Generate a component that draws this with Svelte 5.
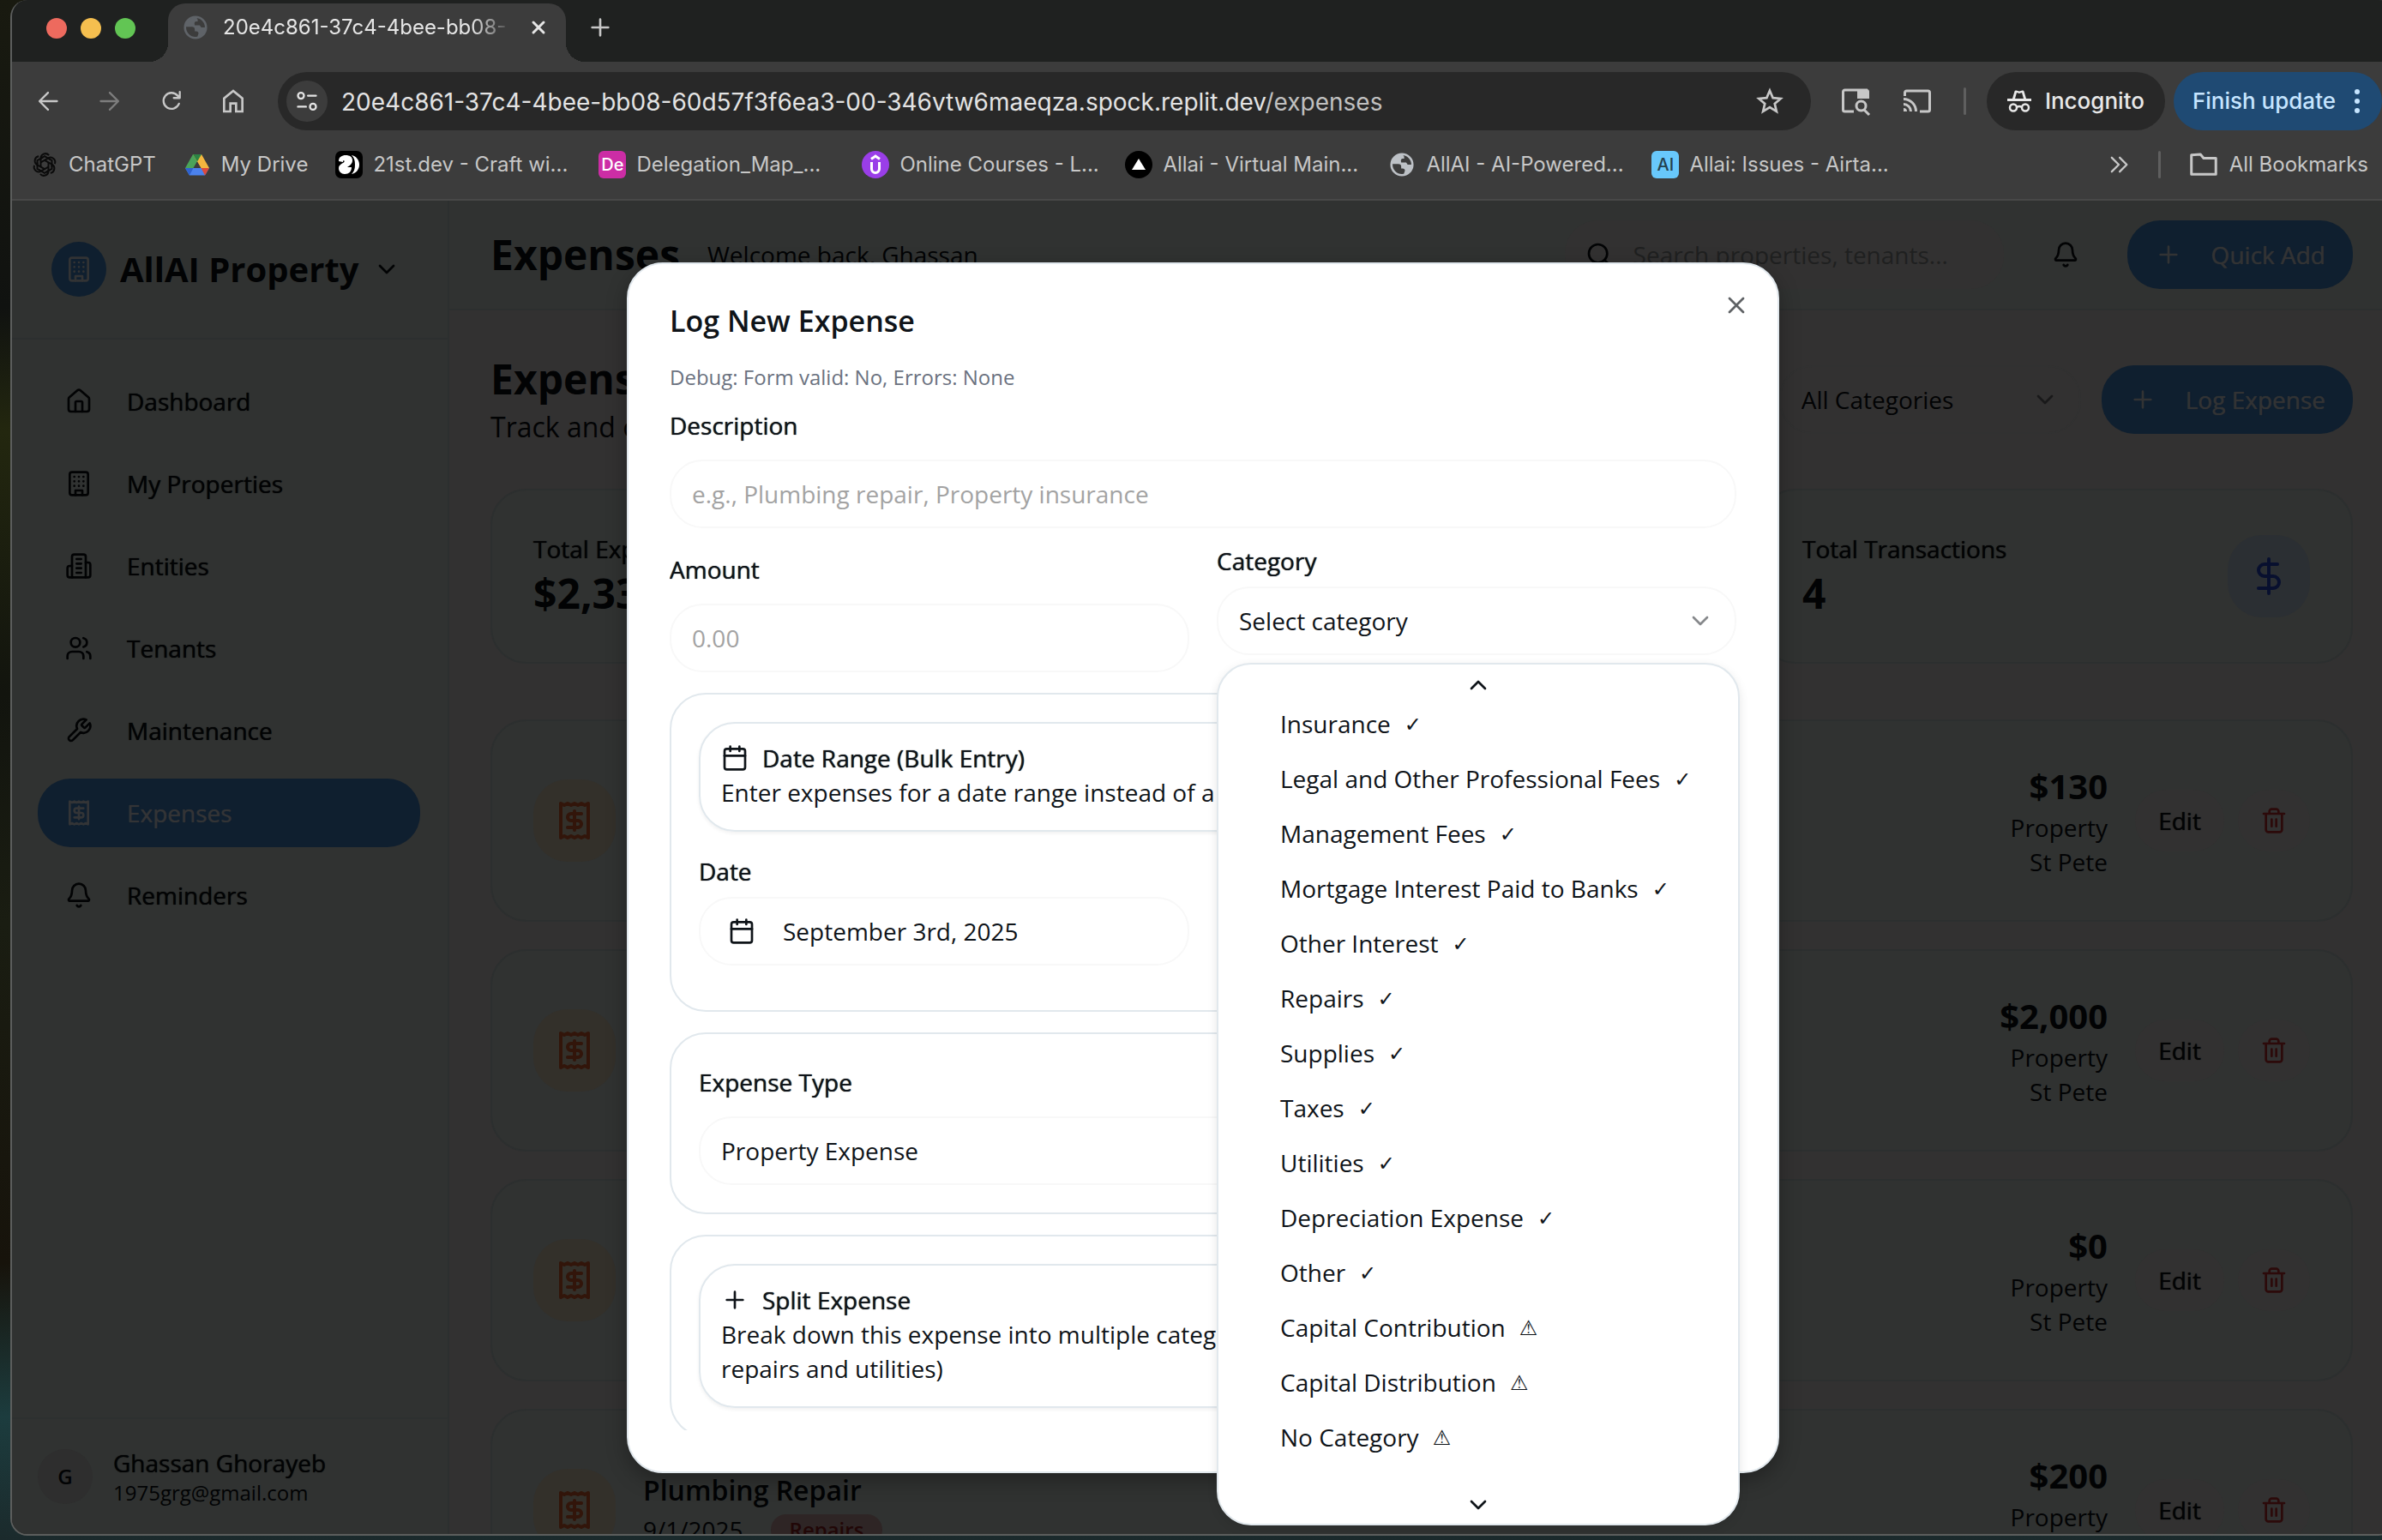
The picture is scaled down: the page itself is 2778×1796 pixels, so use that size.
<script lang="ts">
  const icons: Record<string, string> = {
    home: '<path d="M15 21v-8a1 1 0 0 0-1-1h-4a1 1 0 0 0-1 1v8"/><path d="M3 10a2 2 0 0 1 .709-1.528l7-5.999a2 2 0 0 1 2.582 0l7 5.999A2 2 0 0 1 21 10v9a2 2 0 0 1-2 2H5a2 2 0 0 1-2-2z"/>',
    building: '<rect width="16" height="20" x="4" y="2" rx="2"/><path d="M9 22v-4h6v4M8 6h.01M16 6h.01M12 6h.01M12 10h.01M12 14h.01M16 10h.01M16 14h.01M8 10h.01M8 14h.01"/>',
    building2: '<path d="M6 22V4a2 2 0 0 1 2-2h8a2 2 0 0 1 2 2v18Z"/><path d="M6 12H4a2 2 0 0 0-2 2v6a2 2 0 0 0 2 2h2M18 9h2a2 2 0 0 1 2 2v9a2 2 0 0 1-2 2h-2M10 6h4M10 10h4M10 14h4M10 18h4"/>',
    users: '<path d="M16 21v-2a4 4 0 0 0-4-4H6a4 4 0 0 0-4 4v2"/><circle cx="9" cy="7" r="4"/><path d="M22 21v-2a4 4 0 0 0-3-3.87M16 3.13a4 4 0 0 1 0 7.75"/>',
    wrench: '<path d="M14.7 6.3a1 1 0 0 0 0 1.4l1.6 1.6a1 1 0 0 0 1.4 0l3.77-3.77a6 6 0 0 1-7.94 7.94l-6.91 6.91a2.12 2.12 0 0 1-3-3l6.91-6.91a6 6 0 0 1 7.94-7.94l-3.76 3.76z"/>',
    receipt: '<path d="M4 2v20l2-1 2 1 2-1 2 1 2-1 2 1 2-1 2 1V2l-2 1-2-1-2 1-2-1-2 1-2-1-2 1Z"/><path d="M16 8h-6a2 2 0 1 0 0 4h4a2 2 0 1 1 0 4H8M12 17.5v-11"/>',
    bell: '<path d="M10.268 21a2 2 0 0 0 3.464 0"/><path d="M3.262 15.326A1 1 0 0 0 4 17h16a1 1 0 0 0 .74-1.673C19.41 13.956 18 12.499 18 8A6 6 0 0 0 6 8c0 4.499-1.411 5.956-2.738 7.326"/>',
    down: '<path d="m6 9 6 6 6-6"/>',
    up: '<path d="m18 15-6-6-6 6"/>',
    plus: '<path d="M5 12h14M12 5v14"/>',
    close: '<path d="M18 6 6 18M6 6l12 12"/>',
    search: '<circle cx="11" cy="11" r="8"/><path d="m21 21-4.3-4.3"/>',
    dollar: '<path d="M12 2v20M17 5H9.500a3.500 3.500 0 0 0 0 7h5a3.500 3.500 0 0 1 0 7H6"/>',
    trash: '<path d="M3 6h18M19 6v14c0 1-1 2-2 2H7c-1 0-2-1-2-2V6M8 6V4c0-1 1-2 2-2h4c1 0 2 1 2 2v2M10 11v6M14 11v6"/>',
    calendar: '<path d="M8 2v4M16 2v4"/><rect width="18" height="18" x="3" y="4" rx="2"/><path d="M3 10h18"/>',
    back: '<path d="M21 12H4M12 3.500 3.500 12l8.500 8.500"/>',
    forward: '<path d="M3 12h17M12 3.500l8.500 8.500-8.500 8.500"/>',
    reload: '<path d="M19.500 14.500A8 8 0 1 1 18 6.300l2 2.200M20.300 2.800v6h-6"/>',
    chromehome: '<path d="M4 21V9.500L12 3l8 6.500V21h-5.500v-7h-5v7z"/>',
    star: '<path d="m12 2.800 2.700 6.300 6.800.6-5.200 4.500 1.600 6.700L12 17.300l-5.900 3.600 1.600-6.700-5.200-4.500 6.800-.6z"/>',
    more: '<path d="m5 5 7 7-7 7M13 5l7 7-7 7"/>',
    folder: '<path d="M2.500 4.500v15h19V7H12l-2.500-3z"/>'
  };

  const nav = [
    { icon: 'home', label: 'Dashboard' },
    { icon: 'building', label: 'My Properties' },
    { icon: 'building2', label: 'Entities' },
    { icon: 'users', label: 'Tenants' },
    { icon: 'wrench', label: 'Maintenance' },
    { icon: 'receipt', label: 'Expenses', active: true },
    { icon: 'bell', label: 'Reminders' }
  ];

  const bookmarks = [
    { id: 'gpt', label: 'ChatGPT' },
    { id: 'drive', label: 'My Drive' },
    { id: 'twentyfirst', label: '21st.dev - Craft wi...', long: true },
    { id: 'de', label: 'Delegation_Map_...', long: true },
    { id: 'udemy', label: 'Online Courses - L...', long: true },
    { id: 'vercel', label: 'Allai - Virtual Main...', long: true },
    { id: 'globe', label: 'AllAI - AI-Powered...', long: true },
    { id: 'airtable', label: 'Allai: Issues - Airta...', long: true }
  ];

  const expenses = [
    { amount: '$130' },
    { amount: '$2,000' },
    { amount: '$0' },
    { amount: '$200', title: 'Plumbing Repair', date: '9/1/2025', tag: 'Repairs' }
  ];

  const categories = [
    ['Insurance', '✓'],
    ['Legal and Other Professional Fees', '✓'],
    ['Management Fees', '✓'],
    ['Mortgage Interest Paid to Banks', '✓'],
    ['Other Interest', '✓'],
    ['Repairs', '✓'],
    ['Supplies', '✓'],
    ['Taxes', '✓'],
    ['Utilities', '✓'],
    ['Depreciation Expense', '✓'],
    ['Other', '✓'],
    ['Capital Contribution', '⚠'],
    ['Capital Distribution', '⚠'],
    ['No Category', '⚠']
  ];
</script>

{#snippet icon(name: string, cls = '')}
  <svg class="ic {cls}" viewBox="0 0 24 24" aria-hidden="true">{@html icons[name]}</svg>
{/snippet}

{#snippet globe()}
  <svg class="globe" viewBox="0 0 32 32" aria-hidden="true">
    <circle cx="16" cy="16" r="14" fill="none" stroke="currentColor" stroke-width="3" />
    <path fill="currentColor" d="M17 3C10 2 3 7 2 15h9c3 0 4 1 4 4v2h2c2 0 3 1 3 3l-2 6c7-2 12-7 12-14h-5c-3 0-2-3-4-3h-6c-1-3 0-5 2-5h2c0-3 0-4-2-5z" />
  </svg>
{/snippet}

<div class="desktop">
  <div class="window">
    <div class="tabstrip">
      <div class="lights"><i class="red"></i><i class="yellow"></i><i class="green"></i></div>
      <div class="tab">
        {@render globe()}
        <span class="tabtitle">20e4c861-37c4-4bee-bb08-</span>
        <button class="plain" aria-label="Close tab">{@render icon('close', 's24 w25')}</button>
      </div>
      <button class="plain newtab" aria-label="New tab">{@render icon('plus', 's32')}</button>
    </div>

    <div class="toolbar">
      <div class="navbtns">
        <button class="plain" aria-label="Back">{@render icon('back', 's28')}</button>
        <button class="plain faded" aria-label="Forward">{@render icon('forward', 's28')}</button>
        <button class="plain" aria-label="Reload">{@render icon('reload', 's28')}</button>
        <button class="plain" aria-label="Home">{@render icon('chromehome', 's32 sharp')}</button>
      </div>
      <div class="omnibox">
        <span class="site">
          <svg viewBox="0 0 24 24" class="ic s28" aria-hidden="true"><circle cx="6" cy="6.500" r="3" /><path d="M13 6.500h8M3 17.500h8" /><circle cx="18" cy="17.500" r="3" /></svg>
        </span>
        <div class="url">20e4c861-37c4-4bee-bb08-60d57f3f6ea3-00-346vtw6maeqza.spock.replit.dev<span>/expenses</span></div>
        <button class="plain" aria-label="Bookmark this page">{@render icon('star', 's32 sharp')}</button>
      </div>
      <div class="tools">
        <svg class="s36" viewBox="0 0 36 36" aria-hidden="true"><path d="M16 30H5.500a2 2 0 0 1-2-2V7a2 2 0 0 1 2-2H32" fill="none" stroke="#c7c7c7" stroke-width="3" /><path d="M20 4h11a3 3 0 0 1 3 3v8H20z" fill="#c7c7c7" /><circle cx="24.500" cy="23.500" r="5.500" fill="none" stroke="#c7c7c7" stroke-width="3" /><path d="m28 28 6 6" stroke="#c7c7c7" stroke-width="3" /></svg>
        <svg class="s36" viewBox="0 0 36 36" aria-hidden="true" fill="none" stroke="#c7c7c7" stroke-width="3"><path d="M3.500 12V8a2 2 0 0 1 2-2h25a2 2 0 0 1 2 2v20a2 2 0 0 1-2 2H21M2 15.500A14.500 14.500 0 0 1 16.500 30M2 21.500a8.500 8.500 0 0 1 8.500 8.500" /><path d="M2 26a4 4 0 0 1 4 4H2z" fill="#c7c7c7" stroke="none" /></svg>
        <i class="bar"></i>
      </div>
      <div class="pill">
        <svg class="s28" viewBox="0 0 28 28" aria-hidden="true"><path d="M6 11 8.500 2.500Q9 1 10.500 1.500L14 2.500l3.500-1Q19 1 19.500 2.500L22 11h6v3H0v-3z" fill="#e8e8e8" /><path d="m11 4-2 7h10l-2-7-3 1z" fill="#282828" /><g fill="none" stroke="#e8e8e8" stroke-width="2.500"><circle cx="7" cy="21.500" r="4" /><circle cx="21" cy="21.500" r="4" /><path d="M11 21q3-2 6 0" /></g></svg>
        <span>Incognito</span>
      </div>
      <button class="pill update"><span>Finish update</span><i></i></button>
    </div>

    <div class="bookmarks">
      {#each bookmarks as b}
        <a href="#{b.id}" class="bm">
          {#if b.id === 'gpt'}
            <svg class="fav" viewBox="0 0 32 32" fill="none" stroke="#0b0b0b" stroke-width="2" aria-hidden="true">
              {#each [0, 60, 120, 180, 240, 300] as a}
                <path transform="rotate({a} 16 16)" d="M11.500 18.600V8.400a5.400 5.400 0 0 1 9.600-3.200M11.500 8.800l4.500-2.600 6.500 3.800" />
              {/each}
            </svg>
          {:else if b.id === 'drive'}
            <svg class="fav" viewBox="0 0 32 32" aria-hidden="true"><path d="M11 4h10l-5 8.500L7 28l-5-8z" fill="#4aa35a" /><path d="M11 4h10l9 16H20z" fill="#f3b63f" /><path d="m11 4 5 8.500L21 4z" fill="#2c8344" /><path d="M16 12.500 11.500 20h9z" fill="#3c3c3c" /><path d="M2 20h28l-5 8.500H7z" fill="#4b82ee" /><path d="M20.500 20H30l-5 8.500z" fill="#dc4a3d" /><path d="M2 20h9.500L7 28.500z" fill="#2f62cf" /></svg>
          {:else if b.id === 'twentyfirst'}
            <svg class="fav" viewBox="0 0 32 32" aria-hidden="true"><rect width="32" height="32" rx="7" fill="#000" /><path d="M4 12c0-5 4-7 8-7 5 0 8 2 8 6 0 4-3 6-6 8h5c0 5-3 8-8 8-4 0-7-3-7-7 0-3 2-4 5-6 2-1 2-2 1-3-1 0-1 1-1 2z" fill="#fff" /><path d="M19 5c5 1 9 5 9 11s-4 10-9 11c3-3 4-6 4-11s-1-8-4-11z" fill="#fff" /></svg>
          {:else if b.id === 'globe'}
            <span class="fav pale">{@render globe()}</span>
          {:else if b.id === 'vercel'}
            <svg class="fav" viewBox="0 0 32 32" aria-hidden="true"><circle cx="16" cy="16" r="16" fill="#000" /><path d="m16 9 8 13H8z" fill="#fff" /></svg>
          {:else if b.id === 'udemy'}
            <svg class="fav" viewBox="0 0 32 32" aria-hidden="true"><circle cx="16" cy="16" r="16" fill="#9a3ee8" /><path d="m11 9.500 5-3.500 5 3.500M11.500 13v8a4.500 4.500 0 0 0 9 0v-8" fill="none" stroke="#fff" stroke-width="3" /></svg>
          {:else}
            <span class="fav badge {b.id}">{b.id === 'de' ? 'De' : 'AI'}</span>
          {/if}
          <span class:long={b.long}>{b.label}</span>
        </a>
      {/each}
      <div class="bmend">
        <button class="plain" aria-label="More bookmarks">{@render icon('more', 's28')}</button>
        <i class="bar"></i>
        <a href="#all" class="bm">{@render icon('folder', 's36')}<span>All Bookmarks</span></a>
      </div>
    </div>

    <div class="page">
      <aside>
        <button class="brand">
          <span class="logo">{@render icon('building', 's32')}</span>
          <strong>AllAI Property</strong>
          {@render icon('down', 's32')}
        </button>
        <nav>
          {#each nav as n}
            <a href="#{n.label}" class:active={n.active}>{@render icon(n.icon, 's32')}<span>{n.label}</span></a>
          {/each}
        </nav>
        <div class="user">
          <span class="avatar">G</span>
          <div><b>Ghassan Ghorayeb</b><small>1975grg@gmail.com</small></div>
        </div>
      </aside>

      <main>
        <header>
          <h1>Expenses</h1>
          <p>Welcome back, Ghassan</p>
          <div class="right">
            <label class="search">{@render icon('search', 's32')}<input type="search" placeholder="Search properties, tenants..." aria-label="Search" /></label>
            <button class="bellbtn" aria-label="Notifications">{@render icon('bell', 's32')}</button>
            <button class="primary">{@render icon('plus', 's32')}Quick Add</button>
          </div>
        </header>

        <section class="content">
          <div class="pagehead">
            <div>
              <h1>Expenses</h1>
              <p>Track and categorize your expenses</p>
            </div>
            <div class="right">
              <div class="pick filter">
                <select aria-label="Filter by category"><option>All Categories</option></select>
                {@render icon('down', 's32')}
              </div>
              <button class="primary">{@render icon('plus', 's32')}Log Expense</button>
            </div>
          </div>

          <div class="stats">
            <div class="card"><div><p>Total Expenses</p><strong>$2,330</strong></div></div>
            <div class="card"></div>
            <div class="card">
              <div><p>Total Transactions</p><strong>4</strong></div>
              <span class="tile blue">{@render icon('dollar', 's48')}</span>
            </div>
          </div>

          <div class="list">
            {#each expenses as e}
              <article class="card">
                <span class="tile orange">{@render icon('receipt', 's48')}</span>
                <div class="info">
                  {#if e.title}
                    <h2>{e.title}</h2>
                    <div class="meta"><span>{e.date}</span><em>{e.tag}</em></div>
                  {/if}
                </div>
                <div class="sum"><strong>{e.amount}</strong><span>Property</span><span>St Pete</span></div>
                <div class="acts">
                  <button>Edit</button>
                  <button class="del" aria-label="Delete expense">{@render icon('trash', 's32')}</button>
                </div>
              </article>
            {/each}
          </div>
        </section>
      </main>

      <div class="overlay">
        <div class="modal" role="dialog" aria-modal="true" aria-labelledby="dlg-title">
          <button class="x" aria-label="Close">{@render icon('close', 's32')}</button>
          <div class="scroll">
            <h2 id="dlg-title">Log New Expense</h2>
            <p class="debug">Debug: Form valid: No, Errors: None</p>
            <form>
              <div class="field">
                <label class="tall" for="desc">Description</label>
                <input id="desc" type="text" placeholder="e.g., Plumbing repair, Property insurance" />
              </div>
              <div class="cols">
                <div class="field">
                  <label class="tall" for="amt">Amount</label>
                  <input id="amt" type="text" placeholder="0.00" />
                </div>
                <div class="field">
                  <label for="cat">Category</label>
                  <div class="pick">
                    <select id="cat"><option>Select category</option></select>
                    {@render icon('down', 's32')}
                  </div>
                </div>
              </div>
              <div class="group dates">
                <div class="inner">
                  <h3>{@render icon('calendar', 's32')}Date Range (Bulk Entry)</h3>
                  <p>Enter expenses for a date range instead of a single date</p>
                </div>
                <div class="cols">
                  <div class="field">
                    <label for="date">Date</label>
                    <button id="date" type="button" class="datebtn">{@render icon('calendar', 's32')}September 3rd, 2025</button>
                  </div>
                </div>
              </div>
              <div class="group">
                <div class="field">
                  <label class="tall" for="type">Expense Type</label>
                  <div class="pick"><select id="type"><option>Property Expense</option></select></div>
                </div>
              </div>
              <div class="group">
                <div class="inner">
                  <h3>{@render icon('plus', 's32')}Split Expense</h3>
                  <p>Break down this expense into multiple categories (e.g., part<br />repairs and utilities)</p>
                </div>
              </div>
            </form>
          </div>
          <div class="menu">
            <div class="arrow">{@render icon('up', 's32')}</div>
            <ul role="listbox" aria-label="Category">
              {#each categories as [name, mark]}
                <li role="option" aria-selected="false">{name}<span>{mark}</span></li>
              {/each}
            </ul>
            <div class="arrow">{@render icon('down', 's32')}</div>
          </div>
        </div>
      </div>
    </div>
  </div>
</div>

<style>
  :global(body) { margin: 0; background: #14180d; }
  .desktop, .desktop :global(*) { box-sizing: border-box; }
  .desktop {
    height: 100vh; overflow: hidden; display: flex; padding: 0 0 5px 12px;
    background: linear-gradient(180deg, #191a10 0%, #101210 20%, #23270f 28%, #12140e 45%, #1a1d12 60%, #17130b 82%, #1c3c3e 92%, #1b2a2c 100%);
    font-family: "Open Sans", "Noto Sans", sans-serif; font-size: 28px; line-height: 40px; color: #020304;
  }
  h1, h2, h3, p, ul { margin: 0; padding: 0; font-weight: 400; }
  button, input, select { font: inherit; color: inherit; border: 0; background: none; padding: 0; margin: 0; }
  a { color: inherit; text-decoration: none; }
  .ic { fill: none; stroke: currentColor; stroke-width: 2; stroke-linecap: round; stroke-linejoin: round; flex: none; display: block; }
  .sharp { stroke-linejoin: miter; }
  .s24 { width: 24px; height: 24px; }
  .w25 { stroke-width: 3; }
  .s28 { width: 28px; height: 28px; flex: none; }
  .s32 { width: 32px; height: 32px; }
  .s36 { width: 36px; height: 36px; flex: none; }
  .s48 { width: 48px; height: 48px; }

  .window {
    flex: 1; min-width: 0; margin-right: -16px; display: flex; flex-direction: column; overflow: hidden;
    border: 2px solid #5c5e5d; border-top: 0; border-radius: 20px; background: #3c3c3c;
  }
  .tabstrip, .toolbar, .bookmarks { font-family: Inter, "Liberation Sans", sans-serif; color: #c7c7c7; }
  .plain { display: grid; place-items: center; flex: none; }
  .tabstrip { height: 72px; flex: none; display: flex; padding: 4px 0 0 40px; background: #1f2120; }
  .lights { display: flex; gap: 16px; align-items: center; padding-bottom: 10px; width: 142px; }
  .lights i { width: 24px; height: 24px; border-radius: 50%; }
  .red { background: #ed6a5e; } .yellow { background: #f5bf4f; } .green { background: #62c554; }
  .tab {
    width: 464px; display: flex; align-items: center; gap: 18px; padding: 0 20px 12px 18px; position: relative;
    background: #3c3c3c; border-radius: 20px 20px 0 0; color: #e6e6e6; font-size: 24px;
  }
  .tab::before, .tab::after { content: ''; position: absolute; bottom: 0; width: 22px; height: 22px; }
  .tab::before { right: 100%; background: radial-gradient(circle at 0 0, transparent 22px, #3c3c3c 22px); }
  .tab::after { left: 100%; background: radial-gradient(circle at 100% 0, transparent 22px, #3c3c3c 22px); }
  .globe { width: 28px; height: 28px; display: block; flex: none; }
  .tab .globe { color: #5f6368; }
  .tabtitle { flex: 1; min-width: 0; overflow: hidden; white-space: nowrap; mask-image: linear-gradient(90deg, #000 86%, transparent 100%); }
  .newtab { margin: -12px 0 0 24px; }

  .toolbar { height: 92px; flex: none; display: flex; align-items: center; padding: 0 14px 0 0; font-size: 26px; }
  .navbtns { display: flex; padding-left: 6px; width: 310px; }
  .navbtns button { width: 72px; }
  .faded { color: #7d7d7d; }
  .omnibox { flex: 1; height: 68px; border-radius: 34px; background: #282828; display: flex; align-items: center; padding: 0 32px 0 10px; gap: 16px; }
  .site { width: 48px; height: 48px; border-radius: 50%; background: #3c3c3c; display: grid; place-items: center; color: #e3e3e3; }
  .url { flex: 1; padding-top: 2px; color: #e3e3e3; font-size: 28px; white-space: nowrap; }
  .url span { color: #c0c0c0; }
  .tools { display: flex; align-items: center; gap: 36px; padding: 0 24px 0 34px; }
  .bar { width: 3px; height: 32px; border-radius: 2px; background: #5f5f5f; }
  .pill { height: 68px; border-radius: 34px; display: flex; align-items: center; gap: 16px; padding: 0 24px; background: #282828; color: #e8e8e8; font-weight: 500; margin-right: 10px; white-space: nowrap; }
  .pill.update { background: #1f4a73; color: #c6e5ff; gap: 22px; padding: 0 26px 0 22px; margin: 0; }
  .update i { width: 6px; height: 6px; border-radius: 50%; background: #c6e5ff; box-shadow: 0 -11px #c6e5ff, 0 11px #c6e5ff; }

  .bookmarks { height: 70px; flex: none; display: flex; align-items: flex-start; gap: 32px; padding: 12px 30px 0 22px; font-size: 24px; line-height: 32px; border-bottom: 2px solid #484848; }
  .bm { display: flex; align-items: center; gap: 12px; white-space: nowrap; height: 32px; }
  .long { width: 231px; overflow: hidden; }
  .fav { width: 32px; height: 32px; flex: none; display: grid; place-items: center; }
  .pale { color: #bdc1c6; }
  .badge { border-radius: 6px; color: #fff; font-size: 20px; font-weight: 500; }
  .de { background: #cc2da5; }
  .airtable { background: #68c8fb; color: #24414f; }
  .bmend { margin-left: auto; display: flex; align-items: center; gap: 32px; }

  .page { flex: 1; min-height: 0; position: relative; display: flex; background: #323131; }
  aside { width: 510px; flex: none; display: flex; flex-direction: column; background: #303231; border-right: 2px solid #2c2f2f; }
  .brand { height: 162px; display: flex; align-items: center; gap: 16px; padding: 0 46px; border-bottom: 2px solid #2c2f2f; }
  .brand strong { font-size: 40px; font-weight: 700; white-space: nowrap; }
  .logo { width: 64px; height: 64px; border-radius: 50%; display: grid; place-items: center; background: #0f1f2f; color: #323334; }
  nav { flex: 1; display: flex; flex-direction: column; gap: 16px; padding: 32px 32px 32px 30px; }
  nav a { height: 80px; flex: none; border-radius: 38px; display: flex; align-items: center; gap: 40px; padding: 0 32px; }
  nav .active { background: #0f1f2f; color: #333436; }
  .user { height: 136px; flex: none; display: flex; align-items: center; gap: 24px; padding: 0 30px; border-top: 2px solid #2d3030; }
  .avatar { width: 64px; height: 64px; border-radius: 50%; background: #2e2e2e; display: grid; place-items: center; font-size: 24px; font-weight: 600; }
  .user div { display: flex; flex-direction: column; }
  .user b { font-weight: 400; line-height: 38px; }
  .user small { font-size: 24px; line-height: 32px; }

  /* Open Sans has no medium cut here, so medium text gets a soft edge of its own colour */
  nav a, .user b, .primary, .stats p, .acts button, .field label, .inner h3 { font-weight: 500; text-shadow: 0 0 1px currentColor; }

  main { flex: 1; min-width: 0; overflow: hidden; }
  header { height: 128px; display: flex; align-items: center; padding: 0 48px; background: #303231; border-bottom: 2px solid #2c2f2f; }
  h1 { font-size: 48px; line-height: 64px; font-weight: 700; }
  header p { margin-left: 32px; }
  .right { margin-left: auto; display: flex; align-items: center; gap: 32px; }
  .search { width: 512px; height: 80px; border-radius: 38px; background: #323131; display: flex; align-items: center; gap: 24px; padding: 0 24px; }
  .search input { flex: 1; min-width: 0; outline: 0; }
  .search input::placeholder { color: #1f2020; opacity: 1; }
  .bellbtn { width: 80px; height: 80px; display: grid; place-items: center; }
  .primary { height: 80px; border-radius: 38px; background: #0f1f2f; color: #323334; display: flex; align-items: center; gap: 34px; padding: 0 32px; white-space: nowrap; }
  .content { padding: 48px; }
  .pagehead { display: flex; align-items: center; }
  .pagehead p { font-size: 32px; line-height: 48px; }
  .pagehead .right { gap: 24px; }
  .pick { position: relative; }
  .pick select { width: 100%; height: 80px; padding: 0 24px; border: 2px solid #f8f8f8; border-radius: 38px; appearance: none; }
  .pick .ic { position: absolute; right: 26px; top: 24px; opacity: .5; pointer-events: none; }
  .filter { width: 352px; }
  .filter select { border-color: #313131; }

  .card { border: 2px solid #2c2f2f; border-radius: 42px; background: #303231; padding: 48px; display: flex; align-items: center; }
  .stats { margin-top: 48px; display: grid; grid-template-columns: repeat(3, 1fr); gap: 48px; }
  .stats p { line-height: 40px; }
  .stats strong { display: block; font-size: 48px; line-height: 64px; }
  .tile { width: 96px; height: 96px; border-radius: 40px; display: grid; place-items: center; flex: none; }
  .blue { margin-left: auto; background: #2b2f33; color: #08102f; }
  .orange { background: #33302a; color: #32150a; }
  .list { margin-top: 65px; display: flex; flex-direction: column; gap: 32px; }
  .info { flex: 1; align-self: flex-start; padding: 17px 0 0 32px; }
  .info h2 { font-size: 32px; line-height: 56px; font-weight: 600; }
  .meta { display: flex; gap: 32px; line-height: 32px; margin-top: 2px; }
  .meta em { font-style: normal; font-size: 24px; font-weight: 600; padding: 2px 22px; margin: -2px 0; border-radius: 20px; background: #2e2525; color: #210707; }
  .sum { display: flex; flex-direction: column; text-align: right; }
  .sum strong { font-size: 40px; line-height: 56px; }
  .acts { display: flex; gap: 16px; margin-left: 32px; }
  .acts button { width: 104px; height: 72px; border-radius: 36px; background: #323131; display: grid; place-items: center; }
  .acts .del { width: 84px; color: #2c0a0a; }

  .overlay { position: absolute; inset: 0; padding-top: 1px; display: grid; place-items: center; }
  .modal {
    position: relative; width: 1344px; max-width: 90%; height: calc(100% - 142px); padding: 48px;
    background: #fff; border: 2px solid #e1e8ed; border-radius: 42px; color: #0f1419; box-shadow: 0 8px 24px rgb(0 0 0 / .3);
  }
  .scroll { height: 100%; overflow: hidden; }
  .x { position: absolute; right: 32px; top: 32px; color: #5f6265; }
  .modal h2 { font-size: 34px; line-height: 36px; font-weight: 600; }
  .debug { margin: 32px 0 16px; font-size: 24px; line-height: 32px; color: #6b7280; }
  form { display: flex; flex-direction: column; gap: 24px; }
  .cols { display: grid; grid-template-columns: 1fr 1fr; gap: 32px; }
  .field { display: flex; flex-direction: column; gap: 16px; }
  .field label { line-height: 28px; }
  .field .tall { line-height: 48px; }
  .field input { height: 80px; padding: 0 24px; border: 2px solid #f8f8f8; border-radius: 38px; outline: 0; width: 100%; }
  .field input::placeholder { color: #a3a3a3; opacity: 1; }
  .group { border: 2px solid #e1e8ed; border-radius: 42px; padding: 32px; display: flex; flex-direction: column; gap: 32px; }
  .dates { padding-bottom: 52px; }
  .inner { border: 2px solid #e1e8ed; border-radius: 42px; padding: 24px; box-shadow: 0 2px 4px rgb(0 0 0 / .06); }
  .inner h3 { display: flex; align-items: center; gap: 16px; font-size: 28px; line-height: 32px; margin-bottom: 4px; }
  .inner p { white-space: nowrap; }
  .datebtn { height: 80px; border: 2px solid #f8f8f8; border-radius: 38px; padding: 0 32px; display: flex; align-items: center; gap: 32px; }
  .menu {
    position: absolute; right: 44px; top: 465px; width: 610px; padding: 8px; background: #fff;
    border: 2px solid #e1e8ed; border-radius: 40px; box-shadow: 0 4px 12px rgb(0 0 0 / .1);
  }
  .arrow { display: grid; place-items: center; height: 30px; }
  .menu ul { list-style: none; padding-bottom: 30px; }
  .menu li { height: 64px; padding-left: 64px; line-height: 62px; white-space: nowrap; }
  .menu li span { margin-left: 16px; font-family: "DejaVu Sans", sans-serif; font-size: 24px; line-height: 24px; vertical-align: 2px; }
</style>
